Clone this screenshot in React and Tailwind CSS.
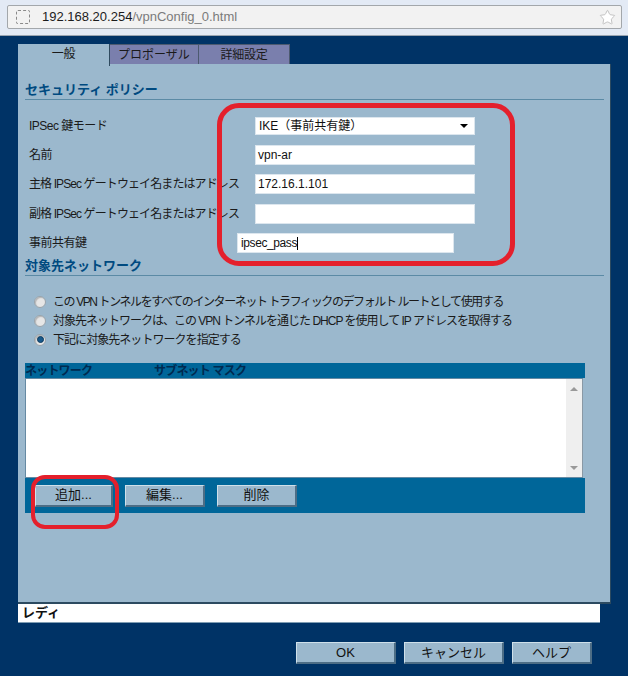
import React from 'react';
import { Star } from 'lucide-react';

const FONT = 'font-["Liberation_Sans","Noto_Sans_CJK_JP",sans-serif]';

const raisedBtn =
  'flex items-center justify-center h-[22px] bg-[#9bb8cd] text-[#111] text-[13px] border-t border-l border-t-[#cfe0ea] border-l-[#cfe0ea] border-r-2 border-b-2 border-r-[#4d6d85] border-b-[#4d6d85]';

const Field = ({ label, value, className = '', labelClass = '', rowClass = 'h-[20px]', children }) => (
  <div className={`flex items-center ${rowClass}`}>
    <div className={`w-[226px] shrink-0 text-[12px] text-[#1a1a1a] ${labelClass}`}>{label}</div>
    <div className={`h-full bg-white flex items-center pl-[2px] pr-[3px] text-[12px] text-[#111] border border-[#dce6ee] ${className}`}>
      {value}
      {children}
    </div>
  </div>
);

const Radio = ({ checked, label, trackClass }) => (
  <div className="flex items-center gap-[7px] h-[19px]">
    <div className="w-[12px] h-[12px] rounded-full bg-[#e6e6e6] border border-[#98a3ab] shadow-[inset_1px_1px_1px_#b5b5b5] flex items-center justify-center">
      {checked && <div className="w-[7px] h-[7px] rounded-full bg-[#17598c] border border-[#0c3a5e]" />}
    </div>
    <span className={`text-[12px] whitespace-nowrap text-[#1a1a1a] ${trackClass}`}>{label}</span>
  </div>
);

const SectionTitle = ({ children, className = '' }) => (
  <div className={`border-b border-[#5b8aa5] text-[13px] font-bold text-[#004a80] leading-[18px] h-[19px] mx-[7px] mr-[6px] ${className}`}>
    {children}
  </div>
);

export default function App() {
  return (
    <div className={`w-[628px] h-[676px] overflow-hidden bg-[#003366] relative ${FONT}`}>
      {/* browser toolbar */}
      <div className="h-[36px] bg-[#e3eaf5] border-b border-[#9aa5b1] pt-[5px] pl-[7px] pr-[6px]">
        <div className="h-[24px] bg-[#f2f2f2] border border-[#a3a7ab] rounded-[2px] flex items-center pl-[8px] pr-[5px]">
          <div className="w-[14px] h-[14px] border border-dashed border-[#8a8a8a] rounded-[2px]" />
          <div className="ml-[12px] text-[13px] text-[#1c1c1c]">
            192.168.20.254<span className="text-[#7b7b7b]">/vpnConfig_0.html</span>
          </div>
          <Star className="ml-auto text-[#b9b9b9] fill-white" size={17} strokeWidth={1.2} />
        </div>
      </div>

      <div className="pl-[18px] pt-[8px]">
        {/* tabs */}
        <div className="flex h-[20px] items-stretch text-[12px] text-[#1a1a1a] tracking-[-0.3px]">
          <div className="w-[92px] h-[22px] bg-[#9bb8cd] border-r border-[#2f4a5f] flex items-center justify-center pb-[3px] relative z-10">一般</div>
          <div className="w-[89px] bg-[#7a7fad] border-t border-r border-[#4c5a70] flex items-center justify-center tracking-[0px]">プロポーザル</div>
          <div className="w-[91px] bg-[#7a7fad] border-t border-r border-[#4c5a70] flex items-center justify-center">詳細設定</div>
        </div>

        {/* main panel */}
        <div className="w-[593px] h-[540px] bg-[#9bb8cd] border-r border-b-2 border-[#2c4a60] pt-[17px]">
          <SectionTitle>セキュリティ ポリシー</SectionTitle>

          <div className="pl-[11px] mt-[17px] flex flex-col gap-[9.5px] tracking-[-0.5px]">
            <Field label="IPSec 鍵モード" rowClass="h-[18px]" className="w-[220px] justify-between">
              <span className="tracking-normal ml-[1px]">IKE（事前共有鍵）</span>
              <span className="w-0 h-0 mr-[3px] border-l-[4px] border-r-[4px] border-t-[4px] border-l-transparent border-r-transparent border-t-black" />
            </Field>
            <Field label="名前" value="vpn-ar" className="w-[220px] tracking-normal" />
            <Field label="主格 IPSec ゲートウェイ名またはアドレス" value="172.16.1.101" className="w-[220px] tracking-normal" labelClass="whitespace-nowrap tracking-[-0.9px]" />
            <Field label="副格 IPSec ゲートウェイ名またはアドレス" value="" className="w-[220px]" labelClass="whitespace-nowrap tracking-[-0.9px]" />
            <Field label="事前共有鍵" className="w-[217px] -ml-[18px] tracking-[-0.4px] pl-[3px]" labelClass="mr-[0px]">
              ipsec_pass<span className="w-px h-[13px] bg-black" />
            </Field>
          </div>

          <SectionTitle className="mt-[4px]">対象先ネットワーク</SectionTitle>

          <div className="pl-[16px] mt-[16px]">
            <Radio label="この VPN トンネルをすべてのインターネット トラフィックのデフォルト ルートとして使用する" trackClass="tracking-[-1.4px]" />
            <Radio label="対象先ネットワークは、この VPN トンネルを通じた DHCP を使用して IP アドレスを取得する" trackClass="tracking-[-1px]" />
            <Radio checked label="下記に対象先ネットワークを指定する" trackClass="tracking-[-0.95px]" />
          </div>

          {/* network list */}
          <div className="ml-[7px] mt-[14px] w-[560px]">
            <div className="h-[15px] bg-[#006699] flex items-center text-[12px] font-bold text-[#002a50] leading-none tracking-[-0.8px]">
              <span className="w-[129px]">ネットワーク</span>
              <span>サブネット マスク</span>
            </div>
            <div className="w-[558px] h-[100px] bg-white border-t border-l border-b border-[#668aa3] flex justify-end">
              <div className="w-[17px] bg-[#efefef] flex flex-col items-center justify-between pt-[8px] pb-[7px] border-r border-[#8a99a5]">
                <span className="w-0 h-0 border-l-[4px] border-r-[4px] border-b-[4px] border-l-transparent border-r-transparent border-b-[#999]" />
                <span className="w-0 h-0 border-l-[4px] border-r-[4px] border-t-[4px] border-l-transparent border-r-transparent border-t-[#999]" />
              </div>
            </div>
            <div className="h-[35px] bg-[#006699] flex items-center pl-[10px] gap-[12px]">
              <div className={`${raisedBtn} w-[78px]`}>追加...</div>
              <div className={`${raisedBtn} w-[80px]`}>編集...</div>
              <div className={`${raisedBtn} w-[80px]`}>削除</div>
            </div>
          </div>
        </div>

        {/* status */}
        <div className="w-[582px] h-[19px] bg-white border-b border-[#7f9db3] flex items-center pl-[4px] text-[13px] font-bold text-[#111]">
          レディ
        </div>

        {/* dialog buttons */}
        <div className="flex justify-start gap-[8px] ml-[278px] mt-[19px]">
          <div className={`${raisedBtn} w-[100px]`}>OK</div>
          <div className={`${raisedBtn} w-[100px]`}>キャンセル</div>
          <div className={`${raisedBtn} w-[80px]`}>ヘルプ</div>
        </div>
      </div>

      {/* red annotations drawn over the screenshot */}
      <div className="absolute left-[217px] top-[103px] w-[298px] h-[163px] border-[5px] border-[#e4202c] rounded-[22px]" />
      <div className="absolute left-[31px] top-[475px] w-[88px] h-[54px] border-[4px] border-[#e4202c] rounded-[14px]" />
    </div>
  );
}
